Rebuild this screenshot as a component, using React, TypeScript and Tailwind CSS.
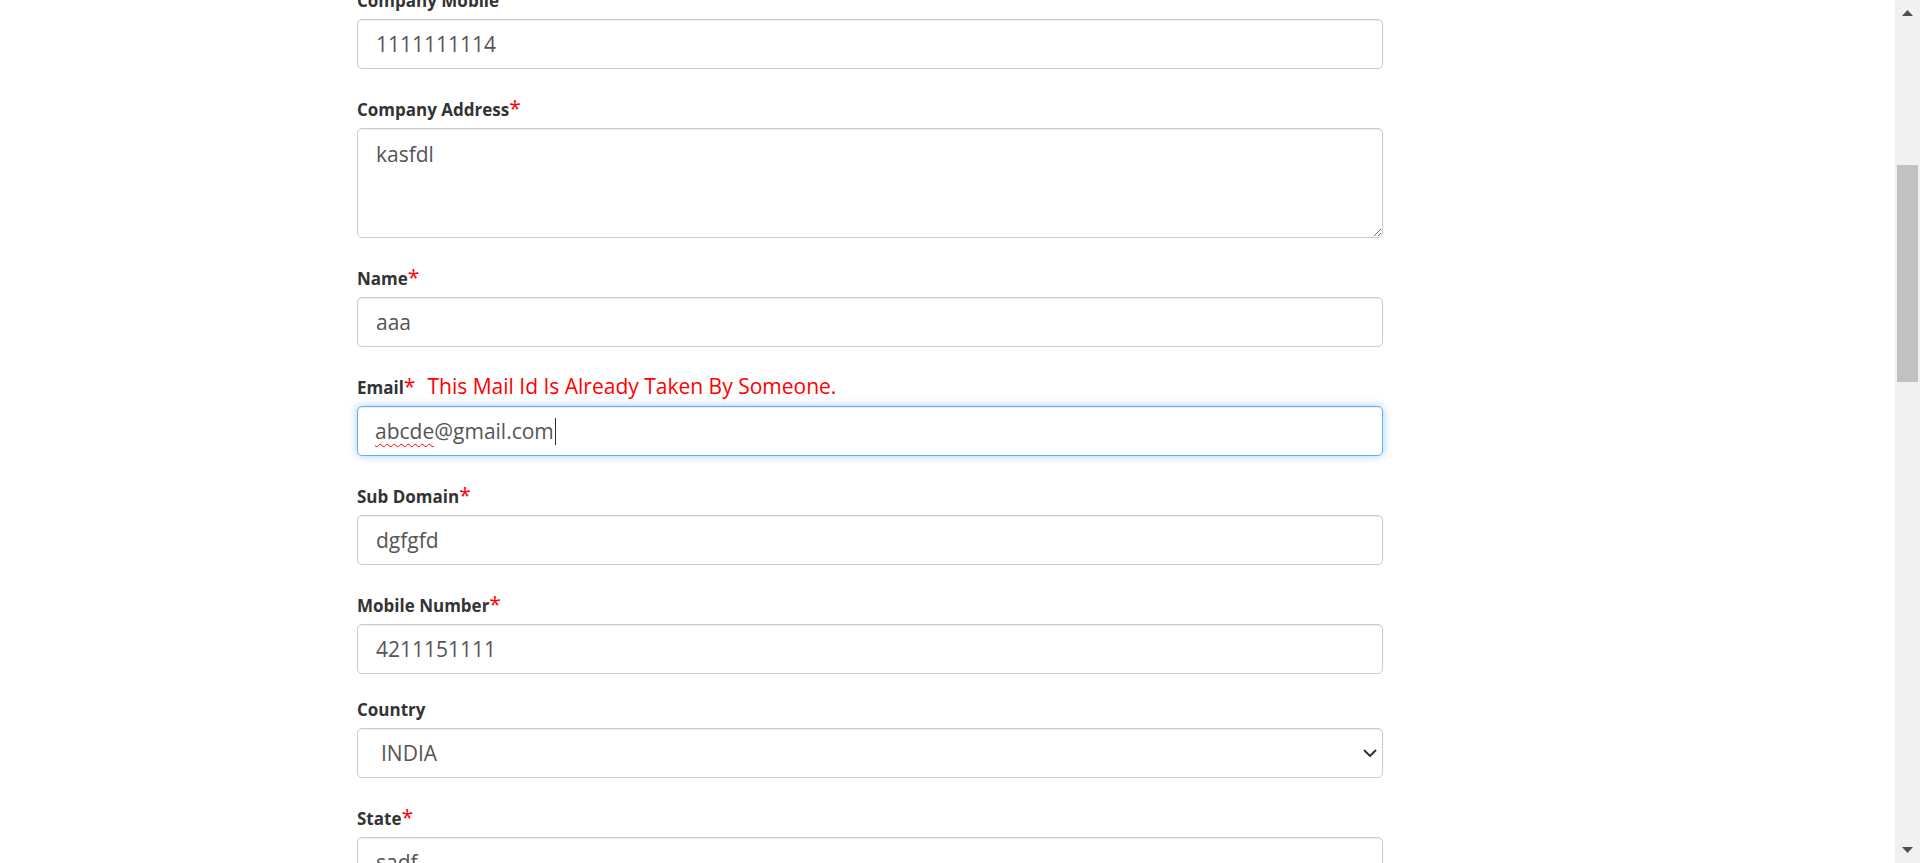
import React from 'react';

interface LabelProps {
  text: string;
  required?: boolean;
  error?: string;
}

const FieldLabel: React.FC<LabelProps> = ({ text, required = false, error }) => (
  <div className={`flex items-end pb-[8px] ${required ? 'h-[59px]' : 'h-[54px]'}`}>
    <div className="whitespace-nowrap text-[17px] font-bold leading-[21px] text-[#333]">
      {text}
      {required && <span className="text-[21px] font-normal leading-[0px] text-[#ff0000]">*</span>}
      {error && (
        <span className="ml-[12px] text-[21px] font-normal leading-[0px] text-[#ff0000]">{error}</span>
      )}
    </div>
  </div>
);

const inputClass =
  'block w-full h-[50px] rounded-[5px] border border-[#ccc] bg-white pl-[18px] pr-[12px] text-[21px] leading-[27px] text-[#555] shadow-[inset_0_1px_1px_rgba(0,0,0,0.075)] outline-none';

const TextField: React.FC<{ label: string; value: string; required?: boolean }> = ({ label, value, required }) => (
  <div>
    <FieldLabel text={label} required={required} />
    <input className={inputClass} value={value} readOnly />
  </div>
);

const ScrollArrow: React.FC<{ up?: boolean }> = ({ up }) => (
  <div className="flex h-[26px] w-full items-center justify-center">
    <svg width="11" height="6" viewBox="0 0 11 6">
      {up ? <path d="M0 6 L5.5 0 L11 6 Z" fill="#505050" /> : <path d="M0 0 L11 0 L5.5 6 Z" fill="#505050" />}
    </svg>
  </div>
);

export default function App() {
  return (
    <div className="flex h-[863px] w-full overflow-hidden bg-white font-['Open_Sans',sans-serif]">
      <div className="flex-1 overflow-hidden">
        <div className="-mt-[35px] ml-[357px] w-[1026px]">
          <TextField label="Company Mobile" value="1111111114" />

          <div>
            <FieldLabel text="Company Address" required />
            <textarea
              className="block w-full h-[110px] rounded-[5px] border border-[#ccc] bg-white pl-[18px] pr-[12px] pt-[12px] text-[21px] leading-[27px] text-[#555] shadow-[inset_0_1px_1px_rgba(0,0,0,0.075)] outline-none"
              value="kasfdl"
              readOnly
            />
          </div>

          <TextField label="Name" value="aaa" required />

          <div>
            <FieldLabel text="Email" required error="This Mail Id Is Already Taken By Someone." />
            <div className="flex h-[50px] w-full items-center rounded-[5px] border border-[#66afe9] bg-white pl-[17px] text-[21px] leading-[27px] text-[#555] shadow-[inset_0_1px_1px_rgba(0,0,0,0.075),0_0_8px_rgba(102,175,233,0.6)]">
              <span className="underline decoration-wavy decoration-[#ff0000] decoration-1 underline-offset-[4px]">abcde</span>
              <span>@gmail.com</span>
              <span className="ml-[1px] inline-block h-[27px] w-px bg-[#333]" />
            </div>
          </div>

          <TextField label="Sub Domain" value="dgfgfd" required />
          <TextField label="Mobile Number" value="4211151111" required />

          <div>
            <FieldLabel text="Country" />
            <div className="relative">
              <select
                className="block w-full h-[50px] appearance-none rounded-[5px] border border-[#ccc] bg-white pl-[23px] text-[21px] leading-[27px] text-[#555] shadow-[inset_0_1px_1px_rgba(0,0,0,0.075)] outline-none"
                defaultValue="INDIA"
              >
                <option value="INDIA">INDIA</option>
              </select>
              <svg
                className="pointer-events-none absolute right-[6px] top-1/2 -translate-y-1/2"
                width="14"
                height="8"
                viewBox="0 0 14 8"
                fill="none"
              >
                <path d="M1 1 L7 7 L13 1" stroke="#333" strokeWidth="2" />
              </svg>
            </div>
          </div>

          <TextField label="State" value="sadf" required />
        </div>
      </div>

      {/* fake browser scrollbar */}
      <div className="flex h-full w-[25px] shrink-0 flex-col items-center bg-[#f1f1f1]">
        <ScrollArrow up />
        <div className="mt-[139px] h-[217px] w-[21px] bg-[#c1c1c1]" />
        <div className="flex-1" />
        <ScrollArrow />
      </div>
    </div>
  );
}
